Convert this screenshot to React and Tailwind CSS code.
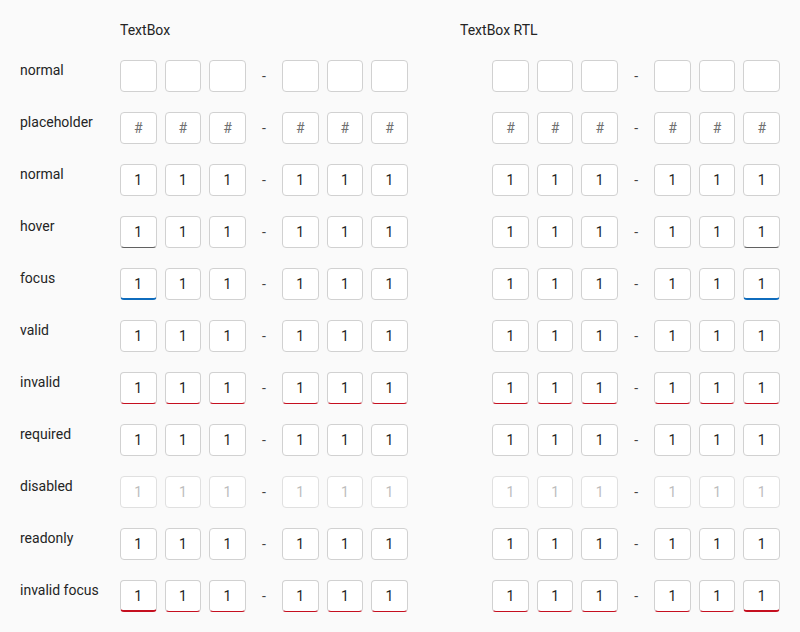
import React from "react";

const rows = [
  { label: "normal", value: "", state: "normal" },
  { label: "placeholder", value: "", placeholder: "#", state: "normal" },
  { label: "normal", value: "1", state: "normal" },
  { label: "hover", value: "1", state: "hover" },
  { label: "focus", value: "1", state: "focus" },
  { label: "valid", value: "1", state: "normal" },
  { label: "invalid", value: "1", state: "invalid" },
  { label: "required", value: "1", state: "normal" },
  { label: "disabled", value: "1", state: "disabled" },
  { label: "readonly", value: "1", state: "normal" },
  { label: "invalid focus", value: "1", state: "invalidFocus" },
];

// only the first box carries hover / focus; invalid applies to all
const boxClass = (state, first) => {
  if (state === "disabled") return "border-[#e0e0e0] text-[#bdbdbd]";
  if (state === "invalid") return "border-[#d1d1d1] border-b-[#c50f1f] text-[#242424]";
  if (state === "invalidFocus")
    return first
      ? "border-[#d1d1d1] border-b-2 border-b-[#c50f1f] text-[#242424]"
      : "border-[#d1d1d1] border-b-[#c50f1f] text-[#242424]";
  if (state === "hover" && first) return "border-[#d1d1d1] border-b-[#616161] text-[#242424]";
  if (state === "focus" && first) return "border-[#d1d1d1] border-b-2 border-b-[#0f6cbd] text-[#242424]";
  return "border-[#d1d1d1] text-[#242424]";
};

const Box = ({ row, first }) => (
  <div
    className={`w-[36.6px] h-8 shrink-0 rounded-[4px] border bg-white flex items-center justify-center text-sm ${boxClass(
      row.state,
      first
    )}`}
  >
    {row.value ? (
      row.value
    ) : row.placeholder ? (
      <span className="text-sm text-[#707070]">{row.placeholder}</span>
    ) : null}
  </div>
);

const Boxes = ({ row, rtl }) => (
  <div dir={rtl ? "rtl" : "ltr"} className="flex items-center gap-2 h-8">
    <Box row={row} first />
    <Box row={row} />
    <Box row={row} />
    <span className="w-[20.2px] text-center text-sm text-[#424242]">-</span>
    <Box row={row} />
    <Box row={row} />
    <Box row={row} />
  </div>
);

export default function App() {
  return (
    <div
      className="min-h-[632px] w-[800px] bg-[#fafafa] pt-5 pl-5 text-sm text-[#242424]"
      style={{ fontFamily: "Roboto, 'Liberation Sans', sans-serif" }}
    >
      <div className="grid grid-cols-[100px_340px_320px] gap-y-5">
        <div className="h-5" />
        <div className="leading-5">TextBox</div>
        <div className="leading-5">TextBox RTL</div>
        {rows.map((row, i) => (
          <React.Fragment key={i}>
            <div className="leading-5">{row.label}</div>
            <Boxes row={row} />
            <Boxes row={row} rtl />
          </React.Fragment>
        ))}
      </div>
    </div>
  );
}
